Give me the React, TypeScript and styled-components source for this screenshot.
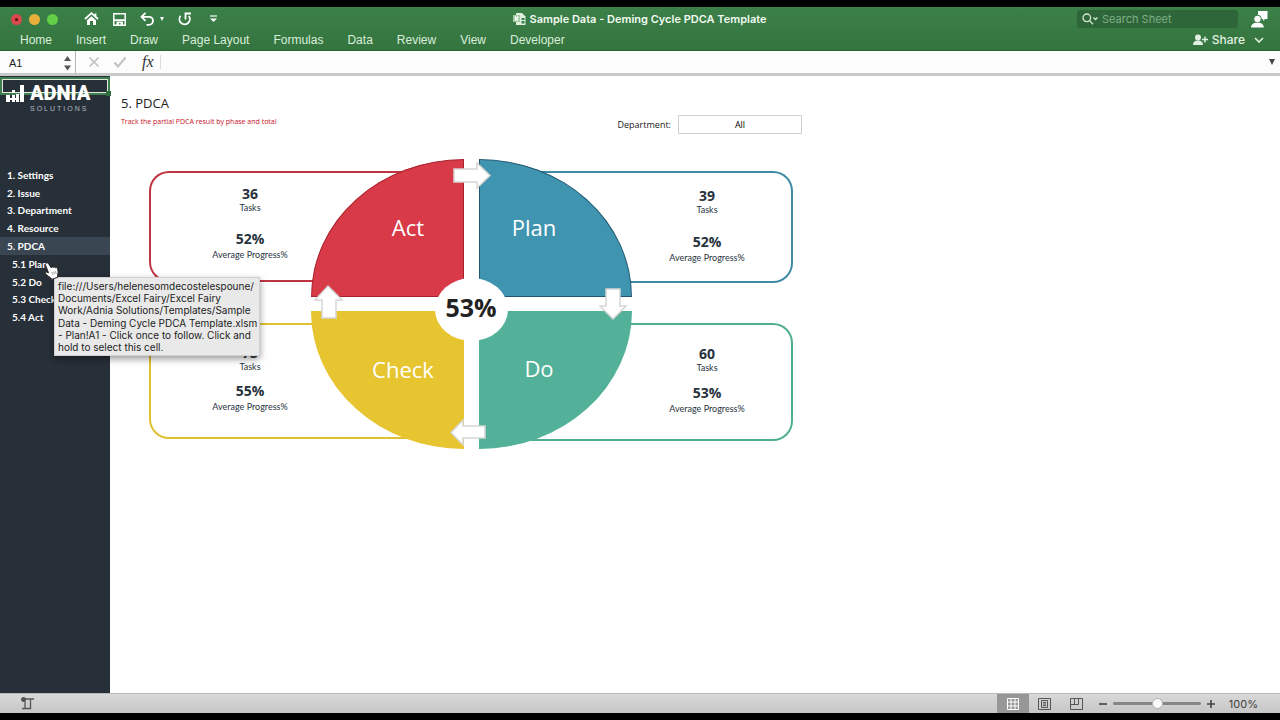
import React from 'react';
import styled, { createGlobalStyle } from 'styled-components';

const ui = '"Inter", "Liberation Sans", sans-serif';
const ribbonFont = '"Liberation Sans", Arial, sans-serif';
const sheetFont = '"Open Sans", "Noto Sans", sans-serif';
const labelFont = '"Lato", "Open Sans", sans-serif';

const GlobalStyle = createGlobalStyle`
  *, *::before, *::after { box-sizing: border-box; }
  body { margin: 0; background: #000; font-family: ${sheetFont}; color: #222; }
  button, input, select { font: inherit; color: inherit; border: 0; padding: 0; margin: 0; background: none; }
  h1, h2, p, ul, dl, dd, dt { margin: 0; padding: 0; font-weight: inherit; }
  ul { list-style: none; }
  a { color: inherit; text-decoration: none; }
  svg { display: block; }
`;

const Window = styled.div`
  display: flex;
  flex-direction: column;
  min-height: 100vh;
  padding: 7px 0;
  background: #000;
`;

/* ---------- ribbon ---------- */

const Ribbon = styled.header`
  height: 44px;
  background: linear-gradient(#3b8048, #35743f);
  border-bottom: 1px solid #2a6135;
  font-family: ${ui};
  color: #e6f3e6;
`;

const TitleBar = styled.div`
  display: grid;
  grid-template-columns: 1fr auto 1fr;
  align-items: center;
  height: 24px;
  padding: 0 12px 0 11px;
`;

const QuickAccess = styled.div`
  display: flex;
  align-items: center;
`;

const Lights = styled.div`
  display: flex;
  gap: 7px;
  margin-right: 26px;
`;

const Light = styled.button<{ $color: string }>`
  display: grid;
  place-items: center;
  width: 11px;
  height: 11px;
  border-radius: 50%;
  background: ${(p) => p.$color};
`;

const LightDot = styled.span`
  width: 3px;
  height: 3px;
  border-radius: 50%;
  background: #4a0f0f;
`;

const Tools = styled.div`
  display: flex;
  align-items: center;
  gap: 14px;
`;

const IconButton = styled.button`
  display: grid;
  grid-auto-flow: column;
  align-items: center;
  gap: 5px;
  color: #fff;
`;

const DocTitle = styled.h1`
  display: flex;
  align-items: center;
  gap: 3px;
  font-size: 11px;
  line-height: 16px;
  font-weight: 600;
  color: #f2faf2;
`;

const TitleEnd = styled.div`
  display: flex;
  justify-content: flex-end;
  align-items: center;
  gap: 13px;
`;

const SearchBox = styled.label`
  display: flex;
  align-items: center;
  gap: 4px;
  width: 161px;
  height: 18px;
  padding-left: 5px;
  border-radius: 3px;
  background: #2e6639;
`;

const SearchInput = styled.input`
  flex: 1;
  min-width: 0;
  font-size: 11px;
  outline: 0;
  &::placeholder { color: #7fae86; opacity: 1; }
`;

const TabRow = styled.div`
  display: flex;
  align-items: center;
  justify-content: space-between;
  height: 18px;
  padding: 0 16px 0 20px;
`;

const Tabs = styled.nav`
  display: flex;
  gap: 24px;
`;

const Tab = styled.button`
  font-family: ${ribbonFont};
  font-size: 12px;
  line-height: 16px;
  color: #daeedb;
`;

const ShareGroup = styled.div`
  display: flex;
  gap: 9px;
`;

const ShareButton = styled(IconButton)`
  gap: 3px;
  font-size: 12px;
  line-height: 16px;
  font-weight: 500;
  color: #e0f0e0;
`;

/* ---------- formula bar ---------- */

const FormulaBar = styled.div`
  display: flex;
  align-items: stretch;
  height: 25px;
  background: #fcfcfc;
  border-bottom: 3px solid #c9c9c9;
  font-family: ${ribbonFont};
`;

const NameBox = styled.div`
  display: flex;
  align-items: center;
  width: 76px;
  padding: 2px 4px 0 9px;
  border-right: 1px solid #b5b5b5;
`;

const NameInput = styled.input`
  flex: 1;
  min-width: 0;
  font-size: 11px;
  outline: 0;
`;

const FormulaTools = styled.div`
  display: flex;
  align-items: center;
  gap: 13px;
  padding: 0 6px 0 12px;
  margin: 4px 0;
  border-right: 1px solid #dcdcdc;
`;

const FormulaInput = styled.input`
  flex: 1;
  min-width: 0;
  padding: 0 8px;
  outline: 0;
`;

const FxButton = styled.button`
  padding-left: 2px;
  font: italic 16px/16px "Liberation Serif", serif;
  color: #333;
`;

const ExpandButton = styled.button`
  width: 17px;
  display: grid;
  place-items: center;
`;

/* ---------- worksheet ---------- */

const Workspace = styled.div`
  display: flex;
  flex: 1;
  background: #fff;
`;

const Sidebar = styled.aside`
  position: relative;
  width: 110px;
  flex: none;
  background: #272f38;
  color: #fff;
`;

const Selection = styled.div`
  position: absolute;
  top: 1px;
  left: 0;
  right: 0;
  height: 18px;
  border: 2px solid #3f7f4e;
  outline: 1px solid #dfe9e0;
  outline-offset: -3px;
`;

const SelectionHandle = styled.span`
  position: absolute;
  right: -3px;
  bottom: -3px;
  width: 5px;
  height: 5px;
  background: #2f6f3f;
`;

const Logo = styled.div`
  position: relative;
  display: grid;
  grid-template-columns: auto auto;
  justify-content: start;
  column-gap: 5px;
  height: 90px;
  align-content: start;
  padding: 7px 0 0 6px;
`;

const LogoName = styled.span`
  font-family: "Roboto", sans-serif;
  font-size: 20px;
  line-height: 21px;
  font-weight: 900;
`;

const LogoSub = styled.span`
  grid-column: 2;
  font-family: "Liberation Sans", sans-serif;
  font-size: 7px;
  line-height: 10px;
  letter-spacing: 2px;
  color: #b3bac0;
`;

const Nav = styled.ul`
  display: flex;
  flex-direction: column;
  height: 160px;
`;

const NavItem = styled.li<{ $active?: boolean; $child?: boolean }>`
  display: flex;
  align-items: center;
  flex: 1;
  padding-left: ${(p) => (p.$child ? 12 : 7)}px;
  background: ${(p) => (p.$active ? '#3a4753' : 'transparent')};
  font-family: ${labelFont};
  font-size: 10px;
  line-height: 14px;
  font-weight: 700;
`;

const Pointer = styled.svg`
  position: absolute;
  left: 44px;
  top: 186px;
  z-index: 3;
`;

const LinkTip = styled.div`
  position: absolute;
  left: 54px;
  top: 201px;
  z-index: 2;
  display: flex;
  flex-direction: column;
  width: 206px;
  height: 79px;
  padding: 2px 3px;
  background: #e9e9e9;
  border: 1px solid #d0d0d0;
  box-shadow: 0 3px 7px rgba(0, 0, 0, 0.4);
  font-family: ${ui};
  font-size: 10px;
  line-height: 12px;
  color: #1c1c1c;
  white-space: nowrap;
`;

const TipLine = styled.span`
  flex: 1;
`;

const Sheet = styled.main`
  flex: 1;
  min-width: 0;
  padding: 18px 11px;
`;

const ReportHeader = styled.div`
  display: flex;
  justify-content: space-between;
  max-width: 681px;
`;

const ReportTitle = styled.h2`
  font-size: 13px;
  line-height: 18px;
  color: #222;
`;

const ReportNote = styled.p`
  margin-top: 4px;
  font-size: 7px;
  line-height: 12px;
  color: #c8101f;
`;

const Filter = styled.div`
  display: flex;
  align-items: center;
  gap: 7px;
  height: 19px;
  margin-top: 21px;
  font-size: 9px;
  color: #222;
`;

const FilterSelect = styled.select`
  appearance: none;
  width: 124px;
  height: 19px;
  border: 1px solid #cfcfcf;
  background: #fff;
  text-align: center;
  text-align-last: center;
  font-size: 9px;
  color: #000;
`;

const Diagram = styled.section`
  display: grid;
  max-width: 644px;
  margin: 25px 0 0 28px;
`;

const Cards = styled.div`
  grid-area: 1 / 1;
  display: grid;
  grid-template-columns: 1fr 1fr;
  grid-template-rows: 112px 118px;
  gap: 40px 16px;
  padding-top: 12px;
  align-items: start;
`;

type CardProps = { $color: string; $side: 'left' | 'right'; $height: number; $top: number; $gap: number };

const Card = styled.dl<CardProps>`
  display: flex;
  flex-direction: column;
  gap: ${(p) => p.$gap}px;
  height: ${(p) => p.$height}px;
  padding-top: ${(p) => p.$top}px;
  border: 2px solid ${(p) => p.$color};
  ${(p) =>
    p.$side === 'left'
      ? 'border-right: 0; border-radius: 20px 0 0 20px; padding-right: 114px;'
      : 'border-left: 0; border-radius: 0 20px 20px 0; padding-left: 144px;'}
`;

const Stat = styled.div<{ $spaced?: boolean }>`
  display: flex;
  flex-direction: column-reverse;
  align-items: center;
  gap: ${(p) => (p.$spaced ? 2 : 0)}px;
  color: #27323d;
`;

const StatLabel = styled.dt`
  font-family: ${labelFont};
  font-size: 9px;
  line-height: 12px;
`;

const StatValue = styled.dd`
  font-size: 14px;
  line-height: 16px;
  font-weight: 700;
`;

const Wheel = styled.div`
  position: relative;
  grid-area: 1 / 1;
  justify-self: center;
  align-self: start;
  display: grid;
  grid-template-columns: 153px 153px;
  grid-template-rows: 138px 138px;
  gap: 14px 15px;
`;

const Wedge = styled.div<{ $color: string; $edge: string; $radius: string; $pad: string }>`
  display: grid;
  place-items: center;
  padding: ${(p) => p.$pad};
  background: ${(p) => p.$color};
  border: 1px solid ${(p) => p.$edge};
  border-radius: ${(p) => p.$radius};
  font-size: 22px;
  line-height: 30px;
  color: #fff;
`;

const Hub = styled.div`
  position: absolute;
  left: 124px;
  top: 119px;
  display: grid;
  place-items: center;
  width: 73px;
  height: 63px;
  padding-bottom: 6px;
  border-radius: 50%;
  background: #fff;
  font-size: 25px;
  line-height: 30px;
  font-weight: 700;
  color: #222;
`;

const Arrows = styled.svg`
  position: absolute;
  left: 0;
  top: 0;
`;

/* ---------- status bar ---------- */

const StatusBar = styled.footer`
  display: flex;
  align-items: center;
  justify-content: space-between;
  height: 20px;
  padding: 0 22px 0 21px;
  background: linear-gradient(#d9d9d9, #c6c6c6);
  border-top: 1px solid #b8b8b8;
  font-family: ${ui};
  color: #444;
`;

const ViewControls = styled.div`
  display: flex;
  align-items: center;
  height: 19px;
`;

const ViewButton = styled.button<{ $active?: boolean }>`
  display: grid;
  place-items: center;
  width: 32px;
  height: 19px;
  background: ${(p) => (p.$active ? '#979797' : 'transparent')};
  color: ${(p) => (p.$active ? '#fff' : '#555')};
`;

const Zoom = styled.div`
  display: flex;
  align-items: center;
  gap: 6px;
  margin-left: 6px;
`;

const ZoomSlider = styled.input`
  appearance: none;
  width: 88px;
  height: 12px;
  &::-webkit-slider-runnable-track { height: 3px; border-radius: 2px; background: #868686; }
  &::-webkit-slider-thumb {
    appearance: none;
    width: 11px;
    height: 11px;
    margin-top: -4px;
    border-radius: 50%;
    background: #fafafa;
    border: 1px solid #b0b0b0;
  }
`;

const ZoomValue = styled.output`
  margin-left: 8px;
  font-size: 11px;
  line-height: 14px;
`;

const tabs = ['Home', 'Insert', 'Draw', 'Page Layout', 'Formulas', 'Data', 'Review', 'View', 'Developer'];

const navItems = [
  { label: '1. Settings' },
  { label: '2. Issue' },
  { label: '3. Department' },
  { label: '4. Resource' },
  { label: '5. PDCA', active: true },
  { label: '5.1 Plan', child: true },
  { label: '5.2 Do', child: true },
  { label: '5.3 Check', child: true },
  { label: '5.4 Act', child: true },
];

const tipLines = [
  'file:///Users/helenesomdecostelespoune/',
  'Documents/Excel Fairy/Excel Fairy',
  'Work/Adnia Solutions/Templates/Sample',
  'Data - Deming Cycle PDCA Template.xlsm',
  '- Plan!A1 - Click once to follow. Click and',
  'hold to select this cell.',
];

const phases = [
  { name: 'Act', color: '#bf3442', side: 'left', height: 111, top: 13, gap: 17, tasks: 36, progress: '52%' },
  { name: 'Plan', color: '#3f8ba5', side: 'right', height: 112, top: 15, gap: 18, tasks: 39, progress: '52%' },
  { name: 'Check', color: '#e0c030', side: 'left', height: 116, top: 20, gap: 10, tasks: 73, progress: '55%' },
  { name: 'Do', color: '#4fae92', side: 'right', height: 118, top: 21, gap: 11, tasks: 60, progress: '53%' },
] as const;

const wedges = [
  { name: 'Act', color: '#d83a48', edge: '#a8202e', radius: '100% 0 0 0', pad: '0 0 2px 42px' },
  { name: 'Plan', color: '#3f94b0', edge: '#1f5870', radius: '0 100% 0 0', pad: '0 42px 2px 0' },
  { name: 'Check', color: '#e7c531', edge: '#e7c531', radius: '0 0 0 100%', pad: '0 0 22px 32px' },
  { name: 'Do', color: '#52b198', edge: '#52b198', radius: '0 0 100% 0', pad: '0 32px 24px 0' },
];

function HomeIcon() {
  return (
    <svg width="15" height="14" viewBox="0 0 15 14">
      <path d="M1 7 7.5 1.2 14 7M11.5 1.5v3" fill="none" stroke="#fff" strokeWidth="1.8" />
      <path d="M3 8.2 7.5 4.2 12 8.2V13H9V9H6v4H3z" fill="#fff" />
    </svg>
  );
}

function SaveIcon() {
  return (
    <svg width="13" height="13" viewBox="0 0 13 13">
      <path d="M.8.8h11.400v11.400H.8z" fill="none" stroke="#fff" strokeWidth="1.500" />
      <path d="M1 6.200h11V8H1zM3.500 8.500h6.500v4H7.500V10H6v2.500H3.500z" fill="#fff" />
    </svg>
  );
}

function UndoIcon() {
  return (
    <svg width="15" height="14" viewBox="0 0 15 14">
      <path d="M5.500.8 1.500 4.800l4 4M1.800 4.800H9a4 4 0 0 1 0 8H6.500" fill="none" stroke="#fff" strokeWidth="1.800" />
    </svg>
  );
}

function RedoIcon() {
  return (
    <svg width="14" height="14" viewBox="0 0 14 14">
      <path d="M2.600 3.800a5.200 5.200 0 1 0 8.200.2M7.500 7.500V1.500h5.500" fill="none" stroke="#fff" strokeWidth="1.800" />
    </svg>
  );
}

function Caret({ size = 5, color = '#fff' }: { size?: number; color?: string }) {
  return (
    <svg width={size} height={size} viewBox="0 0 6 6">
      <path d="M0 0h6L3 6z" fill={color} />
    </svg>
  );
}

function WorkbookIcon() {
  return (
    <svg width="14" height="14" viewBox="0 0 14 14">
      <path d="M3 1h6l3.500 3.500V13H3z" fill="#dff0df" />
      <path d="M0 3h7v7H0z" fill="#9fcaa4" />
      <path d="m1.800 4.500 3.400 4m0-4-3.400 4" stroke="#fff" strokeWidth="1.200" />
      <path d="M8.500 6h3v2h-3zM8.500 9h3v2.500h-3z" fill="#3b8048" />
    </svg>
  );
}

function PersonIcon() {
  return (
    <svg width="17" height="17" viewBox="0 0 17 17">
      <path d="M7 0h9.500v8H14l-1.500 2L12 8H7z" fill="#fff" />
      <circle cx="6.500" cy="8" r="3.800" fill="#fff" stroke="#3a7d46" />
      <path d="M0 16.500c.4-3.400 2.600-4.700 6.500-4.700s6 1.300 6.300 4.700z" fill="#fff" />
    </svg>
  );
}

export default function App() {
  return (
    <>
      <GlobalStyle />
      <Window>
        <Ribbon>
          <TitleBar>
            <QuickAccess>
              <Lights>
                <Light $color="#d9484c" aria-label="Close"><LightDot /></Light>
                <Light $color="#e9af3b" aria-label="Minimize" />
                <Light $color="#62cf46" aria-label="Zoom window" />
              </Lights>
              <Tools>
                <IconButton aria-label="Home"><HomeIcon /></IconButton>
                <IconButton aria-label="Save"><SaveIcon /></IconButton>
                <IconButton aria-label="Undo"><UndoIcon /><Caret size={4} /></IconButton>
                <IconButton aria-label="Redo"><RedoIcon /></IconButton>
                <IconButton aria-label="Customize toolbar">
                  <svg width="18" height="8" viewBox="0 0 18 8">
                    <path d="M4 1h7" stroke="#fff" strokeWidth="1.200" />
                    <path d="M4 3.500h7L7.500 7z" fill="#fff" />
                  </svg>
                </IconButton>
              </Tools>
            </QuickAccess>
            <DocTitle><WorkbookIcon />Sample Data - Deming Cycle PDCA Template</DocTitle>
            <TitleEnd>
              <SearchBox>
                <svg width="16" height="12" viewBox="0 0 16 12" fill="none" stroke="#d5ead5" strokeWidth="1.300">
                  <circle cx="4.800" cy="4.800" r="3.800" />
                  <path d="m7.600 7.600 3.400 3.600M11.500 4.500l2 2 2-2" />
                </svg>
                <SearchInput placeholder="Search Sheet" aria-label="Search Sheet" />
              </SearchBox>
              <IconButton aria-label="Account"><PersonIcon /></IconButton>
            </TitleEnd>
          </TitleBar>
          <TabRow>
            <Tabs>{tabs.map((t) => <Tab key={t}>{t}</Tab>)}</Tabs>
            <ShareGroup>
              <ShareButton>
                <svg width="16" height="12" viewBox="0 0 16 12">
                  <circle cx="5" cy="3.500" r="3" fill="#e0f0e0" />
                  <path d="M0 11c0-3 1.500-4.500 5-4.500S10 8 10 11z" fill="#e0f0e0" />
                  <path d="M12 2.500v6M9 5.500h6" stroke="#e0f0e0" strokeWidth="1.500" />
                </svg>
                Share
              </ShareButton>
              <IconButton aria-label="Collapse ribbon">
                <svg width="10" height="6" viewBox="0 0 10 6"><path d="m1 1 4 4 4-4" fill="none" stroke="#e0f0e0" strokeWidth="1.600" /></svg>
              </IconButton>
            </ShareGroup>
          </TabRow>
        </Ribbon>

        <FormulaBar>
          <NameBox>
            <NameInput defaultValue="A1" aria-label="Name box" />
            <svg width="7" height="16" viewBox="0 0 7 16"><path d="M0 6h7L3.500 1zM0 10.500h7L3.500 15.500z" fill="#555" /></svg>
          </NameBox>
          <FormulaTools>
            <IconButton aria-label="Cancel">
              <svg width="12" height="12" viewBox="0 0 12 12"><path d="m1.500 1.500 9 9m0-9-9 9" stroke="#c2c2c2" strokeWidth="1.700" /></svg>
            </IconButton>
            <IconButton aria-label="Enter">
              <svg width="14" height="12" viewBox="0 0 14 12"><path d="m1.500 6.500 3.500 4 7.500-9" fill="none" stroke="#c2c2c2" strokeWidth="2" /></svg>
            </IconButton>
            <FxButton>fx</FxButton>
          </FormulaTools>
          <FormulaInput aria-label="Formula" />
          <ExpandButton aria-label="Expand formula bar"><Caret size={6} color="#444" /></ExpandButton>
        </FormulaBar>

        <Workspace>
          <Sidebar>
            <Selection><SelectionHandle /></Selection>
            <Logo>
              <svg width="19" height="21" viewBox="0 0 19 21" fill="#fff">
                <path d="M0 12h4v7H0zM6 7h3v3H6zM6 12h3v7H6zM10 11h3v8h-3zM14 2h4v17h-4zM0 15h11v2H0z" />
              </svg>
              <LogoName>ADNIA</LogoName>
              <LogoSub>SOLUTIONS</LogoSub>
            </Logo>
            <Nav>
              {navItems.map((n) => (
                <NavItem key={n.label} $active={n.active} $child={n.child}><a href="#sheet">{n.label}</a></NavItem>
              ))}
            </Nav>
            <Pointer width="16" height="18" viewBox="0 0 16 18">
              <path
                d="M2.200 1.200c1-.7 1.900-.2 2.500.7l2.400 3.800c.4-1 1.700-1.100 2.200-.2.6-.8 1.800-.7 2.200.3.900-.5 1.900 0 2.100 1 .6 2.600.7 4.500-.1 6.500l.3 1.900-6 2.200-1.200-1.700c-1.900-.8-3.400-2.400-4.900-3.800-.9-1-.1-2.200 1.200-1.800l1.600.7L1.700 3.400c-.5-.9-.3-1.700.5-2.200z"
                fill="#fff"
                stroke="#222"
              />
              <path d="m7.800 10 .9 2.600m.9-3 .9 2.600m.9-3 .8 2.600" stroke="#777" strokeWidth=".7" />
            </Pointer>
            <LinkTip role="tooltip">{tipLines.map((l) => <TipLine key={l}>{l}</TipLine>)}</LinkTip>
          </Sidebar>

          <Sheet id="sheet">
            <ReportHeader>
              <div>
                <ReportTitle>5. PDCA</ReportTitle>
                <ReportNote>Track the partial PDCA result by phase and total</ReportNote>
              </div>
              <Filter>
                <label htmlFor="department">Department:</label>
                <FilterSelect id="department"><option>All</option></FilterSelect>
              </Filter>
            </ReportHeader>

            <Diagram>
              <Cards>
                {phases.map((p) => (
                  <Card key={p.name} $color={p.color} $side={p.side} $height={p.height} $top={p.top} $gap={p.gap}>
                    <Stat><StatLabel>Tasks</StatLabel><StatValue>{p.tasks}</StatValue></Stat>
                    <Stat $spaced><StatLabel>Average Progress%</StatLabel><StatValue>{p.progress}</StatValue></Stat>
                  </Card>
                ))}
              </Cards>
              <Wheel>
                {wedges.map((w) => (
                  <Wedge key={w.name} $color={w.color} $edge={w.edge} $radius={w.radius} $pad={w.pad}>{w.name}</Wedge>
                ))}
                <Hub>53%</Hub>
                <Arrows width="321" height="290" viewBox="0 0 321 290" fill="#fff" stroke="#d6d6d6" strokeWidth="1.500">
                  <path d="M143 10h23V4l13 12.500L166 29v-6h-23z" />
                  <path d="M295 130h14v17h6l-13 13-13-13h6z" />
                  <path d="M174 279v-12h-22v-6l-12 12.500L152 286v-7z" />
                  <path d="M11 159v-18H4l13-14 14 14h-6v18z" />
                </Arrows>
              </Wheel>
            </Diagram>
          </Sheet>
        </Workspace>

        <StatusBar>
          <IconButton aria-label="Record macro">
            <svg width="14" height="13" viewBox="0 0 14 13" fill="none" stroke="#555" strokeWidth="1.300">
              <path d="M3 2h10M4 2v9M1 11.500h8.500V2" />
              <circle cx="2.500" cy="2.500" r="1.800" fill="#555" />
            </svg>
          </IconButton>
          <ViewControls>
            <ViewButton $active aria-label="Normal view">
              <svg width="12" height="12" viewBox="0 0 12 12" fill="none" stroke="currentColor"><path d="M.5.5h11v11H.5zM4 0v12M8 0v12M0 4h12M0 8h12" /></svg>
            </ViewButton>
            <ViewButton aria-label="Page layout view">
              <svg width="13" height="12" viewBox="0 0 13 12" fill="none" stroke="currentColor"><path d="M.5.5h12v11H.5zM3.500 2.500h6v7h-6zM5 4.500h3M5 6h3M5 7.500h3" /></svg>
            </ViewButton>
            <ViewButton aria-label="Page break view">
              <svg width="13" height="12" viewBox="0 0 13 12" fill="none" stroke="currentColor"><path d="M.5.5h12v11H.5zM4.500.5v6M8.500.5v6M.5 6.500h8" /></svg>
            </ViewButton>
            <Zoom>
              <IconButton aria-label="Zoom out"><svg width="8" height="8" viewBox="0 0 8 8"><path d="M0 4h8" stroke="#444" strokeWidth="1.600" /></svg></IconButton>
              <ZoomSlider type="range" min="0" max="100" defaultValue="51" aria-label="Zoom" />
              <IconButton aria-label="Zoom in"><svg width="8" height="8" viewBox="0 0 8 8"><path d="M0 4h8M4 0v8" stroke="#444" strokeWidth="1.600" /></svg></IconButton>
              <ZoomValue>100%</ZoomValue>
            </Zoom>
          </ViewControls>
        </StatusBar>
      </Window>
    </>
  );
}
